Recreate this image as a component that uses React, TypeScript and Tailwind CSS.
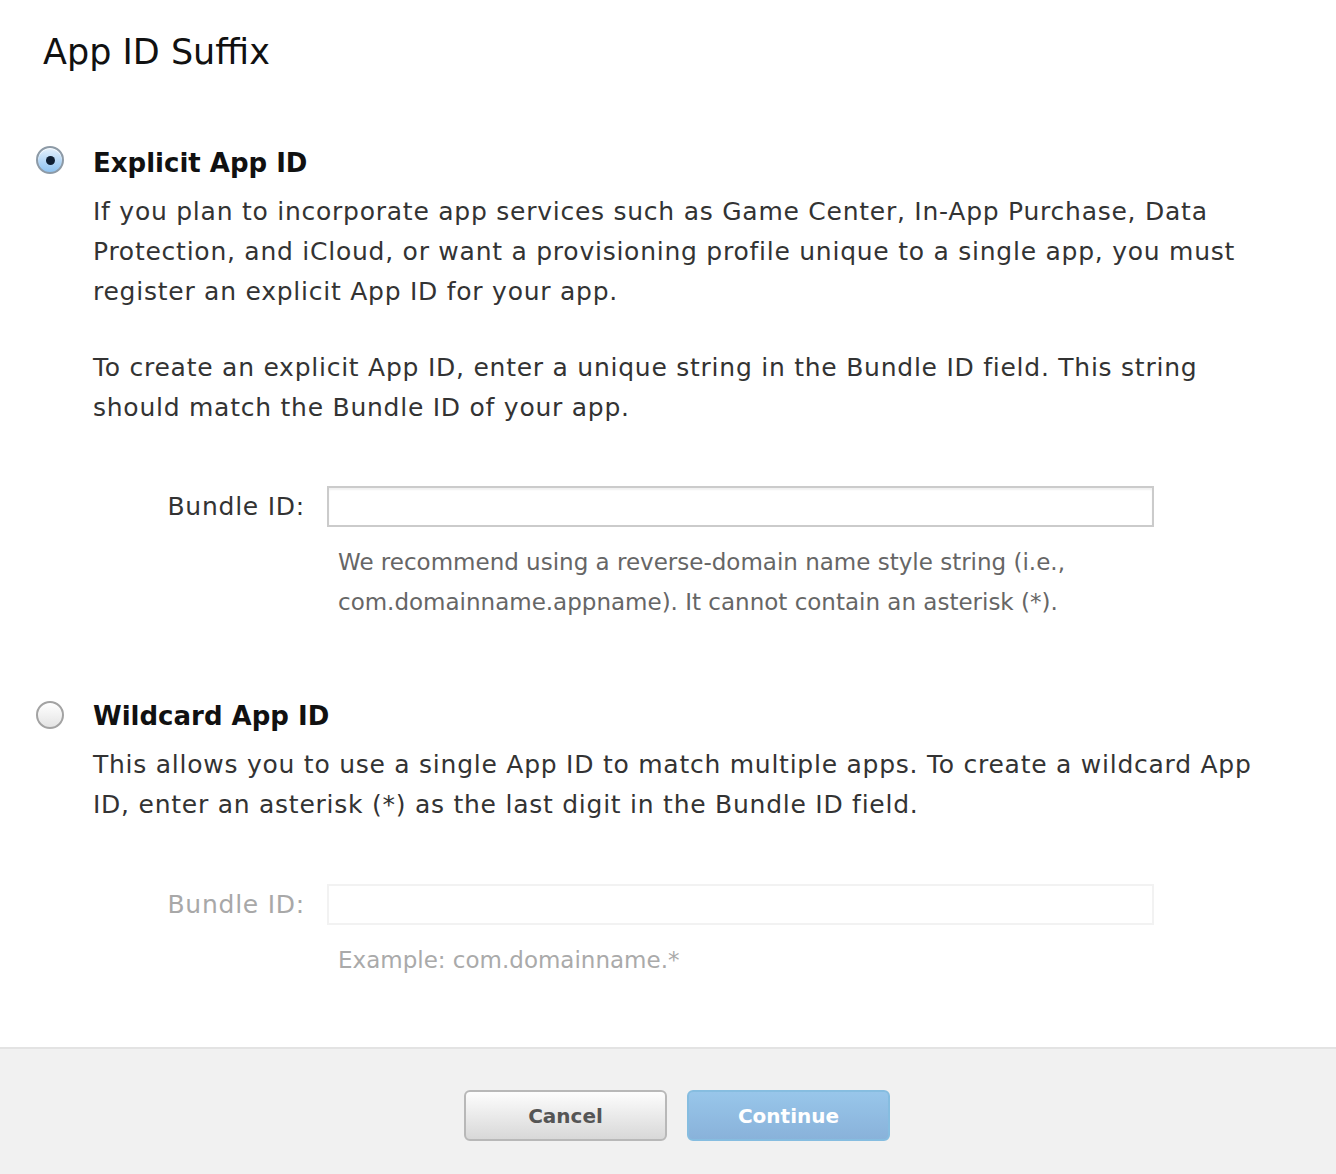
import React from "react";

function Radio({ checked }: { checked: boolean }) {
  return checked ? (
    <div className="w-[28px] h-[28px] rounded-full border-2 border-[#8d9aa6] bg-gradient-to-b from-[#e4f1fd] via-[#b8d9f7] to-[#8ec3f1] flex items-center justify-center shadow-[inset_0_1px_1px_rgba(255,255,255,0.9)]">
      <div className="w-[9px] h-[9px] rounded-full bg-[#0f1f33]" />
    </div>
  ) : (
    <div className="w-[28px] h-[28px] rounded-full border-2 border-[#a3a3a3] bg-gradient-to-b from-[#ffffff] to-[#e4e4e4]" />
  );
}

export default function App() {
  return (
    <div className="w-[1336px] h-[1174px] bg-white flex flex-col font-['DejaVu_Sans',sans-serif] text-[#333333]">
      <div className="flex-1">
        <h1 className="pl-[43px] pt-[30px] text-[35px] leading-[44px] text-[#111111] font-normal whitespace-nowrap">
          App ID Suffix
        </h1>

        {/* Explicit */}
        <div className="flex pt-[69px] pl-[36px]">
          <div className="w-[57px] pt-[3px]">
            <Radio checked />
          </div>
          <div>
            <h2 className="text-[26px] leading-[40px] mb-[9px] font-bold text-[#111111] whitespace-nowrap">Explicit App ID</h2>
            <p className="text-[25px] leading-[40px] tracking-[0.75px] whitespace-nowrap">
              If you plan to incorporate app services such as Game Center, In-App Purchase, Data
              <br />
              Protection, and iCloud, or want a provisioning profile unique to a single app, you must
              <br />
              register an explicit App ID for your app.
            </p>
            <p className="mt-[36px] text-[25px] leading-[40px] tracking-[0.75px] whitespace-nowrap">
              To create an explicit App ID, enter a unique string in the Bundle ID field. This string
              <br />
              should match the Bundle ID of your app.
            </p>
          </div>
        </div>
        <div className="flex items-center mt-[58px]">
          <div className="w-[305px] text-right text-[25px] tracking-[0.75px] whitespace-nowrap">Bundle ID:</div>
          <div className="ml-[22px] w-[827px] h-[41px] border-2 border-[#cbcbcb] shadow-[inset_0_2px_2px_rgba(0,0,0,0.06)] bg-white" />
        </div>
        <p className="ml-[338px] mt-[15px] text-[23px] leading-[40px] text-[#666666] whitespace-nowrap">
          We recommend using a reverse-domain name style string (i.e.,
          <br />
          com.domainname.appname). It cannot contain an asterisk (*).
        </p>

        {/* Wildcard */}
        <div className="flex pt-[74px] pl-[36px]">
          <div className="w-[57px] pt-[5px]">
            <Radio checked={false} />
          </div>
          <div>
            <h2 className="text-[26px] leading-[40px] mb-[9px] font-bold text-[#111111] whitespace-nowrap">Wildcard App ID</h2>
            <p className="text-[25px] leading-[40px] tracking-[0.75px] whitespace-nowrap">
              This allows you to use a single App ID to match multiple apps. To create a wildcard App
              <br />
              ID, enter an asterisk (*) as the last digit in the Bundle ID field.
            </p>
          </div>
        </div>
        <div className="flex items-center mt-[59px]">
          <div className="w-[305px] text-right text-[25px] tracking-[0.75px] text-[#a8a8a8] whitespace-nowrap">Bundle ID:</div>
          <div className="ml-[22px] w-[827px] h-[41px] border-2 border-[#f2f2f2] bg-white" />
        </div>
        <p className="ml-[338px] mt-[15px] text-[23px] leading-[40px] text-[#aaaaaa] whitespace-nowrap">
          Example: com.domainname.*
        </p>
      </div>

      <div className="h-[127px] border-t-2 border-[#e3e3e3] bg-[#f1f1f1] flex justify-center gap-[20px] pt-[41px] pl-[18px]">
        <button className="w-[203px] h-[51px] rounded-[6px] border-2 border-[#b8b8b8] bg-gradient-to-b from-[#fdfdfd] to-[#d8d8d8] text-[20px] font-bold text-[#555555]">
          Cancel
        </button>
        <button className="w-[203px] h-[51px] rounded-[6px] border-2 border-[#86bde0] bg-gradient-to-b from-[#98c6ea] to-[#89b2da] text-[20px] font-bold text-white">
          Continue
        </button>
      </div>
    </div>
  );
}
